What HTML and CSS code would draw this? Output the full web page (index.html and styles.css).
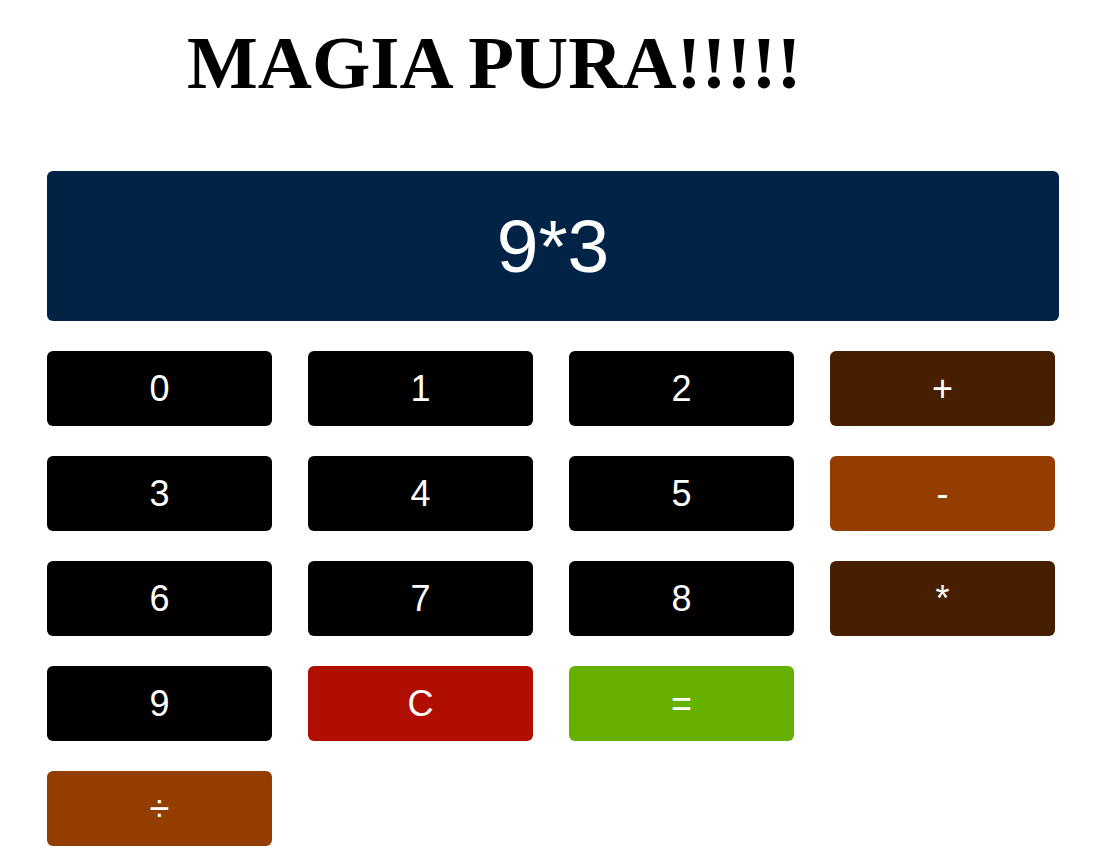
FILE: index.html
```html
<!DOCTYPE html>
<html lang="es">
<head>
<meta charset="utf-8">
<title>Calculadora</title>
<link rel="stylesheet" href="styles.css">
</head>
<body>
<h1 class="title">MAGIA PURA!!!!!</h1>
<main class="calc">
  <div class="display">9*3</div>
  <div class="keys">
    <button class="key num">0</button>
    <button class="key num">1</button>
    <button class="key num">2</button>
    <button class="key op-dark">+</button>
    <button class="key num">3</button>
    <button class="key num">4</button>
    <button class="key num">5</button>
    <button class="key op-light">-</button>
    <button class="key num">6</button>
    <button class="key num">7</button>
    <button class="key num">8</button>
    <button class="key op-dark">*</button>
    <button class="key num">9</button>
    <button class="key clear">C</button>
    <button class="key equals">=</button>
    <span class="empty"></span>
    <button class="key op-light">÷</button>
  </div>
</main>
</body>
</html>
```
FILE: styles.css
```css
html, body {
  margin: 0;
  padding: 0;
  background: #ffffff;
}
body {
  font-family: "Liberation Sans", Arial, sans-serif;
  overflow: hidden;
}
.title {
  margin: 0;
  padding: 25px 0 0 187px;
  font-family: "Liberation Serif", "Times New Roman", serif;
  font-weight: bold;
  font-size: 75px;
  line-height: 75px;
  color: #000;
}
.calc {
  padding: 0 38px 0 47px;
  margin-top: 71px;
}
.display {
  height: 150px;
  background: #002346;
  border-radius: 6px;
  color: #fff;
  font-size: 75px;
  display: flex;
  align-items: center;
  justify-content: center;
}
.keys {
  margin-top: 30px;
  display: grid;
  grid-template-columns: repeat(4, 225px);
  column-gap: 36px;
  row-gap: 30px;
}
.key {
  height: 75px;
  border: none;
  border-radius: 6px;
  color: #fff;
  font-family: "Liberation Sans", Arial, sans-serif;
  font-size: 36px;
  padding: 0;
  margin: 0;
}
.num { background: #000000; }
.op-dark { background: #461e00; }
.op-light { background: #933d00; }
.clear { background: #b00e00; }
.equals { background: #66b000; }
```
